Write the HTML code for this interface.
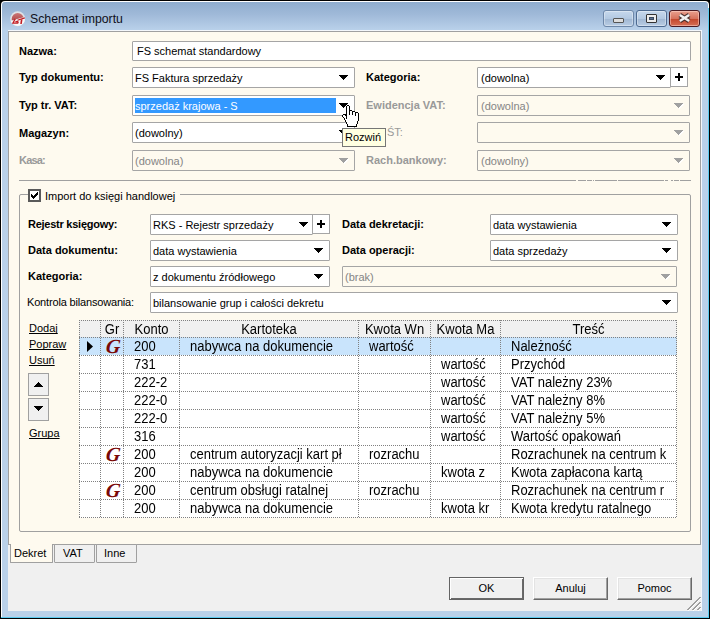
<!DOCTYPE html>
<html><head><meta charset="utf-8">
<style>
*{box-sizing:border-box;margin:0;padding:0}
html,body{width:710px;height:619px;overflow:hidden;background:#000}
body{position:relative;font-family:"Liberation Sans",sans-serif;font-size:11px;color:#000}
.a{position:absolute}
.t{position:absolute;white-space:nowrap;line-height:13px;font-size:11px}
.b{font-weight:bold}
.g{color:#999}
.box{position:absolute;border:1px solid #a5a5a5;background:#fff;height:21px;border-radius:1px}
.box.dis{background:#fefaef}
.arr{position:absolute;width:9px;height:5px;top:7px;shape-rendering:crispEdges}
.plus{position:absolute;border:1px solid #a5a5a5;background:#fff;width:18px;height:20px}
.plus:before{content:"";position:absolute;left:4px;top:8px;width:8px;height:2px;background:#000}
.plus:after{content:"";position:absolute;left:7px;top:5px;width:2px;height:8px;background:#000}
.gl{position:absolute;overflow:hidden;white-space:nowrap;font-size:13px;line-height:17px;transform:scaleY(1.1);transform-origin:0 13px}
.btn{position:absolute;width:75px;height:23px;background:#f0f0f0;border:1px solid;border-color:#fff #696969 #696969 #fff;box-shadow:inset -1px -1px 0 #a0a0a0,inset 1px 1px 0 #e3e3e3;text-align:center;line-height:20px;font-size:11px}
.dh{height:1px;background:repeating-linear-gradient(90deg,#808080 0 1px,transparent 1px 2px)}
.dv{width:1px;background:repeating-linear-gradient(180deg,#808080 0 1px,transparent 1px 2px)}
.gG{position:absolute;font-family:"Liberation Serif",serif;font-weight:bold;font-style:italic;font-size:20px;line-height:18px;color:#7a0808;transform:skewX(-7deg);transform-origin:0 18px}
</style></head><body>
<!-- window frame -->
<div class="a" style="left:0;top:0;width:710px;height:619px;border-radius:5px 5px 0 0;background:#000"></div>
<div class="a" style="left:1px;top:1px;width:708px;height:617px;border-radius:4px 4px 0 0;background:#fff"></div>
<div class="a" style="left:2px;top:2px;width:706px;height:615px;border-radius:3px 3px 0 0;background:linear-gradient(#8fadcf 0px,#9fb9d8 12px,#b9d1ea 28px,#bad1e9 100%)"></div>
<div class="a" style="left:708px;top:8px;width:1px;height:610px;background:#5ccbef"></div>
<div class="a" style="left:1px;top:617px;width:708px;height:1px;background:#5ccbef"></div>
<!-- client -->
<div class="a" style="left:8px;top:30px;width:694px;height:1px;background:#f4f7fb"></div>
<div class="a" style="left:701px;top:30px;width:1px;height:581px;background:#f4f7fb"></div>
<div class="a" style="left:8px;top:31px;width:693px;height:580px;background:#f0f0f0"></div>
<div class="a" style="left:8px;top:31px;width:693px;height:514px;background:#fefaef;border:1px solid #a0a0a0"></div>

<!-- title -->
<svg class="a" style="left:9px;top:10px" width="18" height="18" viewBox="0 0 18 18">
<defs><linearGradient id="rg" x1="0" y1="0" x2="0" y2="1"><stop offset="0" stop-color="#c97575"/><stop offset="1" stop-color="#a83434"/></linearGradient>
<clipPath id="cc"><circle cx="8.7" cy="8.7" r="7.2"/></clipPath><clipPath id="ct"><path d="M0 0H18V6.2L0 11.2Z"/></clipPath></defs>
<circle cx="8.7" cy="8.7" r="7.5" fill="#e9e9e9" opacity=".85"/>
<circle cx="8.7" cy="9" r="6" fill="url(#rg)" clip-path="url(#ct)"/>
<path clip-path="url(#cc)" d="M0 11.6 L18 6.6 V18 H0Z" fill="#fff" opacity=".75"/>
<path d="M6.2 8.9 L3.9 13.2 L8.7 13.2 L9.3 11.7 M6.4 11.7 L9.4 11.5" stroke="#c21d24" stroke-width="1.3" fill="none"/>
<path d="M8.5 10.3 L15.8 7.9" stroke="#c21d24" stroke-width="1.2" fill="none"/>
<path d="M12.7 9.3 L12 14" stroke="#c21d24" stroke-width="1.6" fill="none"/>
</svg>
<div class="t" style="left:30px;top:12px;font-size:12.3px;line-height:14px;color:#101020">Schemat importu</div>
<!-- caption buttons -->
<div class="a" style="left:603px;top:10px;width:31px;height:17px;border:1px solid #6d87a8;border-radius:3px;background:linear-gradient(#c6d8ec 0,#b3c9e2 50%,#9fb6d2 51%,#b9cde4 100%);box-shadow:inset 0 0 0 1px rgba(255,255,255,.35)"></div>
<div class="a" style="left:613px;top:18px;width:11px;height:5px;background:#ddd;border:1px solid #555;border-radius:1px"></div>
<div class="a" style="left:636px;top:10px;width:31px;height:17px;border:1px solid #4d6a90;border-radius:3px;background:linear-gradient(#c6d8ec 0,#b3c9e2 50%,#9fb6d2 51%,#b9cde4 100%);box-shadow:inset 0 0 0 1px rgba(255,255,255,.35)"></div>
<div class="a" style="left:646px;top:14px;width:11px;height:9px;background:#ececec;border:1px solid #333;border-radius:1px"></div>
<div class="a" style="left:649px;top:17px;width:5px;height:3px;background:#5a7090;border:1px solid #3a4a60"></div>
<div class="a" style="left:669px;top:10px;width:31px;height:17px;border:1px solid #4a1a22;border-radius:3px;background:linear-gradient(#e9a08e 0,#d7735e 50%,#c2452a 51%,#d66f55 100%);box-shadow:inset 0 0 0 1px rgba(255,220,210,.5)"></div>
<svg class="a" style="left:676px;top:11px" width="17" height="14" viewBox="0 0 17 14"><path d="M3.8 4 L13.2 10 M13.2 4 L3.8 10" stroke="#3d2b2b" stroke-width="4.6" opacity=".9"/><path d="M3.8 4 L13.2 10 M13.2 4 L3.8 10" stroke="#f2f2f2" stroke-width="2.6"/></svg>

<!-- top form -->
<div class="t b" style="left:19px;top:45px">Nazwa:</div>
<div class="box" style="left:132px;top:41px;width:559px;height:20px"></div>
<div class="t" style="left:137px;top:45px">FS schemat standardowy</div>

<div class="t b" style="left:19px;top:71px">Typ dokumentu:</div>
<div class="box" style="left:132px;top:67px;width:223px"><svg class="arr" style="left:206px" viewBox="0 0 9 5"><path d="M0 0h9v1h-1v1h-1v1h-1v1h-1v1h-1v-1h-1v-1h-1v-1h-1v-1h-1z"/></svg></div>
<div class="t" style="left:135px;top:72px">FS Faktura sprzedaży</div>

<div class="t b" style="left:19px;top:99px">Typ tr. VAT:</div>
<div class="box" style="left:132px;top:95px;width:223px"><svg class="arr" style="left:206px" viewBox="0 0 9 5"><path d="M0 0h9v1h-1v1h-1v1h-1v1h-1v1h-1v-1h-1v-1h-1v-1h-1v-1h-1z"/></svg></div>
<div class="a" style="left:135px;top:98px;width:201px;height:15px;background:#3399ff"></div>
<div class="t" style="left:135px;top:100px;color:#fff">sprzedaż krajowa - S</div>

<div class="t b" style="left:19px;top:127px">Magazyn:</div>
<div class="box" style="left:132px;top:122px;width:223px"><svg class="arr" style="left:206px" viewBox="0 0 9 5"><path d="M0 0h9v1h-1v1h-1v1h-1v1h-1v1h-1v-1h-1v-1h-1v-1h-1v-1h-1z"/></svg></div>
<div class="t" style="left:135px;top:127px">(dowolny)</div>

<div class="t b g" style="left:19px;top:154px;letter-spacing:-0.8px">Kasa:</div>
<div class="box dis" style="left:132px;top:150px;width:223px"><svg class="arr" style="left:206px;overflow:visible;filter:drop-shadow(1px 1px 0 #fff)" viewBox="0 0 9 5"><path d="M0 0h9v1h-1v1h-1v1h-1v1h-1v1h-1v-1h-1v-1h-1v-1h-1v-1h-1z" fill="#a0a0a0"/></svg></div>
<div class="t" style="color:#858585;left:135px;top:155px">(dowolna)</div>

<div class="t b" style="left:366px;top:71px">Kategoria:</div>
<div class="box" style="left:477px;top:67px;width:194px"><svg class="arr" style="left:178px" viewBox="0 0 9 5"><path d="M0 0h9v1h-1v1h-1v1h-1v1h-1v1h-1v-1h-1v-1h-1v-1h-1v-1h-1z"/></svg></div>
<div class="plus" style="left:670px;top:67px"></div>
<div class="t" style="left:481px;top:72px">(dowolna)</div>

<div class="t b g" style="left:366px;top:99px">Ewidencja VAT:</div>
<div class="box dis" style="left:477px;top:95px;width:213px"><svg class="arr" style="left:196px;overflow:visible;filter:drop-shadow(1px 1px 0 #fff)" viewBox="0 0 9 5"><path d="M0 0h9v1h-1v1h-1v1h-1v1h-1v1h-1v-1h-1v-1h-1v-1h-1v-1h-1z" fill="#a0a0a0"/></svg></div>
<div class="t" style="color:#858585;left:481px;top:100px">(dowolna)</div>

<div class="t g" style="left:387px;top:126px">ŚT:</div>
<div class="box dis" style="left:477px;top:122px;width:213px"><svg class="arr" style="left:196px;overflow:visible;filter:drop-shadow(1px 1px 0 #fff)" viewBox="0 0 9 5"><path d="M0 0h9v1h-1v1h-1v1h-1v1h-1v1h-1v-1h-1v-1h-1v-1h-1v-1h-1z" fill="#a0a0a0"/></svg></div>

<div class="t b g" style="left:366px;top:154px">Rach.bankowy:</div>
<div class="box dis" style="left:477px;top:150px;width:213px"><svg class="arr" style="left:196px;overflow:visible;filter:drop-shadow(1px 1px 0 #fff)" viewBox="0 0 9 5"><path d="M0 0h9v1h-1v1h-1v1h-1v1h-1v1h-1v-1h-1v-1h-1v-1h-1v-1h-1z" fill="#a0a0a0"/></svg></div>
<div class="t" style="color:#858585;left:481px;top:155px">(dowolny)</div>

<!-- separator -->
<div class="a" style="left:19px;top:180px;width:672px;height:1px;background:#a0a0a0"></div>

<div class="a" style="left:576px;top:180px;width:2px;height:1px;background:#fefaef"></div><div class="a" style="left:586px;top:180px;width:1px;height:1px;background:#fefaef"></div><div class="a" style="left:592px;top:180px;width:1px;height:1px;background:#fefaef"></div><div class="a" style="left:594px;top:180px;width:1px;height:1px;background:#fefaef"></div><div class="a" style="left:617px;top:180px;width:1px;height:1px;background:#fefaef"></div><div class="a" style="left:664px;top:180px;width:1px;height:1px;background:#fefaef"></div><div class="a" style="left:668px;top:180px;width:3px;height:1px;background:#fefaef"></div><div class="a" style="left:673px;top:180px;width:1px;height:1px;background:#fefaef"></div><div class="a" style="left:679px;top:180px;width:1px;height:1px;background:#fefaef"></div>
<!-- group box -->
<div class="a" style="left:19px;top:194px;width:672px;height:338px;border:1px solid #a0a0a0;border-radius:2px"></div>
<div class="a" style="left:28px;top:190px;width:152px;height:10px;background:#fefaef"></div>
<div class="a" style="left:28px;top:189px;width:13px;height:13px;border:2px solid #5a5a5a;background:#fff"></div>
<svg class="a" style="left:31px;top:192px" width="7" height="7" shape-rendering="crispEdges"><path d="M6 0h1v1h-1zM5 1h2v1h-2zM0 2h1v1h-1zM4 2h3v1h-3zM0 3h2v1h-2zM3 3h3v1h-3zM0 4h5v1h-5zM1 5h3v1h-3zM2 6h1v1h-1z"/></svg>
<div class="t" style="left:45px;top:190px">Import do księgi handlowej</div>

<div class="t b" style="left:28px;top:218px;letter-spacing:-0.25px">Rejestr księgowy:</div>
<div class="box" style="left:150px;top:214px;width:163px"><svg class="arr" style="left:148px" viewBox="0 0 9 5"><path d="M0 0h9v1h-1v1h-1v1h-1v1h-1v1h-1v-1h-1v-1h-1v-1h-1v-1h-1z"/></svg></div>
<div class="plus" style="left:312px;top:214px"></div>
<div class="t" style="left:153px;top:219px">RKS - Rejestr sprzedaży</div>

<div class="t b" style="left:28px;top:244px">Data dokumentu:</div>
<div class="box" style="left:150px;top:240px;width:180px"><svg class="arr" style="left:163px" viewBox="0 0 9 5"><path d="M0 0h9v1h-1v1h-1v1h-1v1h-1v1h-1v-1h-1v-1h-1v-1h-1v-1h-1z"/></svg></div>
<div class="t" style="left:153px;top:245px">data wystawienia</div>

<div class="t b" style="left:28px;top:270px">Kategoria:</div>
<div class="box" style="left:150px;top:266px;width:180px"><svg class="arr" style="left:163px" viewBox="0 0 9 5"><path d="M0 0h9v1h-1v1h-1v1h-1v1h-1v1h-1v-1h-1v-1h-1v-1h-1v-1h-1z"/></svg></div>
<div class="t" style="left:153px;top:271px">z dokumentu źródłowego</div>

<div class="t" style="left:27px;top:296px;letter-spacing:-0.17px">Kontrola bilansowania:</div>
<div class="box" style="left:150px;top:292px;width:528px"><svg class="arr" style="left:511px" viewBox="0 0 9 5"><path d="M0 0h9v1h-1v1h-1v1h-1v1h-1v1h-1v-1h-1v-1h-1v-1h-1v-1h-1z"/></svg></div>
<div class="t" style="left:153px;top:297px">bilansowanie grup i całości dekretu</div>

<div class="t b" style="left:342px;top:218px">Data dekretacji:</div>
<div class="box" style="left:490px;top:214px;width:188px"><svg class="arr" style="left:171px" viewBox="0 0 9 5"><path d="M0 0h9v1h-1v1h-1v1h-1v1h-1v1h-1v-1h-1v-1h-1v-1h-1v-1h-1z"/></svg></div>
<div class="t" style="left:493px;top:219px">data wystawienia</div>

<div class="t b" style="left:342px;top:244px">Data operacji:</div>
<div class="box" style="left:490px;top:240px;width:188px"><svg class="arr" style="left:171px" viewBox="0 0 9 5"><path d="M0 0h9v1h-1v1h-1v1h-1v1h-1v1h-1v-1h-1v-1h-1v-1h-1v-1h-1z"/></svg></div>
<div class="t" style="left:493px;top:245px">data sprzedaży</div>

<div class="box dis" style="left:342px;top:266px;width:335px"><svg class="arr" style="left:318px;overflow:visible;filter:drop-shadow(1px 1px 0 #fff)" viewBox="0 0 9 5"><path d="M0 0h9v1h-1v1h-1v1h-1v1h-1v1h-1v-1h-1v-1h-1v-1h-1v-1h-1z" fill="#a0a0a0"/></svg></div>
<div class="t" style="color:#858585;left:345px;top:271px">(brak)</div>

<!-- side links -->
<div class="t" style="left:29px;top:322px;text-decoration:underline;text-decoration-skip-ink:none">Dodaj</div>
<div class="t" style="left:29px;top:338px;text-decoration:underline;text-decoration-skip-ink:none">Popraw</div>
<div class="t" style="left:29px;top:354px;text-decoration:underline;text-decoration-skip-ink:none">Usuń</div>
<div class="a" style="left:28px;top:373px;width:21px;height:23px;background:#f0f0f0;border:1px solid #a0a0a0"><svg class="a" style="left:5px;top:8px" width="9" height="5" viewBox="0 0 9 5" shape-rendering="crispEdges"><path d="M4 0h1v1h1v1h1v1h1v1h1v1h-9v-1h1v-1h1v-1h1v-1h1z"/></svg></div>
<div class="a" style="left:28px;top:398px;width:21px;height:23px;background:#f0f0f0;border:1px solid #a0a0a0"><svg class="a" style="left:5px;top:7px" width="9" height="5" viewBox="0 0 9 5" shape-rendering="crispEdges"><path d="M0 0h9v1h-1v1h-1v1h-1v1h-1v1h-1v-1h-1v-1h-1v-1h-1v-1h-1z"/></svg></div>
<div class="t" style="left:29px;top:427px;text-decoration:underline;text-decoration-skip-ink:none">Grupa</div>

<!-- GRID -->
<div class="a" style="left:79px;top:320px;width:598px;height:198px;background:#fff"></div>
<div class="a" style="left:79px;top:320px;width:598px;height:17px;background:#f0f0f0"></div>
<div class="a" style="left:79px;top:337px;width:598px;height:18px;background:#c9e4fc"></div>
<div class="a dh" style="left:79px;top:320px;width:598px"></div>
<div class="a dh" style="left:79px;top:337px;width:598px"></div>
<div class="a dh" style="left:79px;top:355px;width:598px"></div>
<div class="a dh" style="left:79px;top:373px;width:598px"></div>
<div class="a dh" style="left:79px;top:391px;width:598px"></div>
<div class="a dh" style="left:79px;top:409px;width:598px"></div>
<div class="a dh" style="left:79px;top:427px;width:598px"></div>
<div class="a dh" style="left:79px;top:445px;width:598px"></div>
<div class="a dh" style="left:79px;top:463px;width:598px"></div>
<div class="a dh" style="left:79px;top:481px;width:598px"></div>
<div class="a dh" style="left:79px;top:499px;width:598px"></div>
<div class="a dh" style="left:79px;top:517px;width:598px"></div>
<div class="a dv" style="left:79px;top:320px;height:198px"></div>
<div class="a dv" style="left:100px;top:320px;height:198px"></div>
<div class="a dv" style="left:123px;top:320px;height:198px"></div>
<div class="a dv" style="left:179px;top:320px;height:198px"></div>
<div class="a dv" style="left:358px;top:320px;height:198px"></div>
<div class="a dv" style="left:430px;top:320px;height:198px"></div>
<div class="a dv" style="left:500px;top:320px;height:198px"></div>
<div class="a dv" style="left:676px;top:320px;height:198px"></div>
<div class="gl" style="left:101px;top:320px;width:22px;text-align:center;top:321px">Gr</div>
<div class="gl" style="left:124px;top:320px;width:55px;text-align:center;top:321px">Konto</div>
<div class="gl" style="left:180px;top:320px;width:178px;text-align:center;top:321px">Kartoteka</div>
<div class="gl" style="left:359px;top:320px;width:71px;text-align:center;top:321px">Kwota Wn</div>
<div class="gl" style="left:431px;top:320px;width:69px;text-align:center;top:321px">Kwota Ma</div>
<div class="gl" style="left:501px;top:320px;width:175px;text-align:center;top:321px">Treść</div>
<svg class="a" style="left:87px;top:341px" width="6" height="11" viewBox="0 0 6 11"><path d="M0 0L6 5.5L0 11Z"/></svg>
<div class="gG" style="left:105px;top:337px">G</div>
<div class="gl" style="left:134px;top:338px;width:44px">200</div>
<div class="gl" style="left:190px;top:338px;width:167px">nabywca na dokumencie</div>
<div class="gl" style="left:369px;top:338px;width:60px">wartość</div>
<div class="gl" style="left:511px;top:338px;width:164px">Należność</div>
<div class="gl" style="left:134px;top:356px;width:44px">731</div>
<div class="gl" style="left:441px;top:356px;width:58px">wartość</div>
<div class="gl" style="left:511px;top:356px;width:164px">Przychód</div>
<div class="gl" style="left:134px;top:374px;width:44px">222-2</div>
<div class="gl" style="left:441px;top:374px;width:58px">wartość</div>
<div class="gl" style="left:511px;top:374px;width:164px">VAT należny 23%</div>
<div class="gl" style="left:134px;top:392px;width:44px">222-0</div>
<div class="gl" style="left:441px;top:392px;width:58px">wartość</div>
<div class="gl" style="left:511px;top:392px;width:164px">VAT należny 8%</div>
<div class="gl" style="left:134px;top:410px;width:44px">222-0</div>
<div class="gl" style="left:441px;top:410px;width:58px">wartość</div>
<div class="gl" style="left:511px;top:410px;width:164px">VAT należny 5%</div>
<div class="gl" style="left:134px;top:428px;width:44px">316</div>
<div class="gl" style="left:441px;top:428px;width:58px">wartość</div>
<div class="gl" style="left:511px;top:428px;width:164px">Wartość opakowań</div>
<div class="gG" style="left:105px;top:445px">G</div>
<div class="gl" style="left:134px;top:446px;width:44px">200</div>
<div class="gl" style="left:190px;top:446px;width:167px">centrum autoryzacji kart pł</div>
<div class="gl" style="left:369px;top:446px;width:60px">rozrachu</div>
<div class="gl" style="left:511px;top:446px;width:164px">Rozrachunek na centrum k</div>
<div class="gl" style="left:134px;top:464px;width:44px">200</div>
<div class="gl" style="left:190px;top:464px;width:167px">nabywca na dokumencie</div>
<div class="gl" style="left:441px;top:464px;width:58px">kwota z</div>
<div class="gl" style="left:511px;top:464px;width:164px">Kwota zapłacona kartą</div>
<div class="gG" style="left:105px;top:481px">G</div>
<div class="gl" style="left:134px;top:482px;width:44px">200</div>
<div class="gl" style="left:190px;top:482px;width:167px">centrum obsługi ratalnej</div>
<div class="gl" style="left:369px;top:482px;width:60px">rozrachu</div>
<div class="gl" style="left:511px;top:482px;width:164px">Rozrachunek na centrum r</div>
<div class="gl" style="left:134px;top:500px;width:44px">200</div>
<div class="gl" style="left:190px;top:500px;width:167px">nabywca na dokumencie</div>
<div class="gl" style="left:441px;top:500px;width:58px">kwota kr</div>
<div class="gl" style="left:511px;top:500px;width:164px">Kwota kredytu ratalnego</div>
<!-- /GRID -->

<!-- tooltip + cursor -->
<div class="a" style="left:342px;top:128px;width:44px;height:19px;background:#ffffe1;border:1px solid #767676"></div>
<div class="t" style="left:345px;top:131px">Rozwiń</div>
<svg class="a" style="left:342px;top:105px" width="17" height="22" shape-rendering="crispEdges"><rect x="5" y="0" width="2" height="1" fill="#000"/><rect x="4" y="1" width="1" height="1" fill="#000"/><rect x="5" y="1" width="2" height="1" fill="#fff"/><rect x="7" y="1" width="1" height="1" fill="#000"/><rect x="4" y="2" width="1" height="1" fill="#000"/><rect x="5" y="2" width="2" height="1" fill="#fff"/><rect x="7" y="2" width="1" height="1" fill="#000"/><rect x="4" y="3" width="1" height="1" fill="#000"/><rect x="5" y="3" width="2" height="1" fill="#fff"/><rect x="7" y="3" width="1" height="1" fill="#000"/><rect x="4" y="4" width="1" height="1" fill="#000"/><rect x="5" y="4" width="2" height="1" fill="#fff"/><rect x="7" y="4" width="1" height="1" fill="#000"/><rect x="4" y="5" width="1" height="1" fill="#000"/><rect x="5" y="5" width="2" height="1" fill="#fff"/><rect x="7" y="5" width="3" height="1" fill="#000"/><rect x="4" y="6" width="1" height="1" fill="#000"/><rect x="5" y="6" width="2" height="1" fill="#fff"/><rect x="7" y="6" width="1" height="1" fill="#000"/><rect x="8" y="6" width="2" height="1" fill="#fff"/><rect x="10" y="6" width="3" height="1" fill="#000"/><rect x="4" y="7" width="1" height="1" fill="#000"/><rect x="5" y="7" width="2" height="1" fill="#fff"/><rect x="7" y="7" width="1" height="1" fill="#000"/><rect x="8" y="7" width="2" height="1" fill="#fff"/><rect x="10" y="7" width="1" height="1" fill="#000"/><rect x="11" y="7" width="2" height="1" fill="#fff"/><rect x="13" y="7" width="3" height="1" fill="#000"/><rect x="4" y="8" width="1" height="1" fill="#000"/><rect x="5" y="8" width="2" height="1" fill="#fff"/><rect x="7" y="8" width="1" height="1" fill="#000"/><rect x="8" y="8" width="2" height="1" fill="#fff"/><rect x="10" y="8" width="1" height="1" fill="#000"/><rect x="11" y="8" width="2" height="1" fill="#fff"/><rect x="13" y="8" width="1" height="1" fill="#000"/><rect x="14" y="8" width="2" height="1" fill="#fff"/><rect x="16" y="8" width="1" height="1" fill="#000"/><rect x="1" y="9" width="4" height="1" fill="#000"/><rect x="5" y="9" width="2" height="1" fill="#fff"/><rect x="7" y="9" width="1" height="1" fill="#000"/><rect x="8" y="9" width="2" height="1" fill="#fff"/><rect x="10" y="9" width="1" height="1" fill="#000"/><rect x="11" y="9" width="2" height="1" fill="#fff"/><rect x="13" y="9" width="1" height="1" fill="#000"/><rect x="14" y="9" width="2" height="1" fill="#fff"/><rect x="16" y="9" width="1" height="1" fill="#000"/><rect x="0" y="10" width="1" height="1" fill="#000"/><rect x="1" y="10" width="2" height="1" fill="#fff"/><rect x="3" y="10" width="2" height="1" fill="#000"/><rect x="5" y="10" width="8" height="1" fill="#fff"/><rect x="13" y="10" width="1" height="1" fill="#000"/><rect x="14" y="10" width="2" height="1" fill="#fff"/><rect x="16" y="10" width="1" height="1" fill="#000"/><rect x="0" y="11" width="1" height="1" fill="#000"/><rect x="1" y="11" width="3" height="1" fill="#fff"/><rect x="4" y="11" width="1" height="1" fill="#000"/><rect x="5" y="11" width="11" height="1" fill="#fff"/><rect x="16" y="11" width="1" height="1" fill="#000"/><rect x="1" y="12" width="1" height="1" fill="#000"/><rect x="2" y="12" width="2" height="1" fill="#fff"/><rect x="4" y="12" width="1" height="1" fill="#000"/><rect x="5" y="12" width="11" height="1" fill="#fff"/><rect x="16" y="12" width="1" height="1" fill="#000"/><rect x="2" y="13" width="1" height="1" fill="#000"/><rect x="3" y="13" width="1" height="1" fill="#fff"/><rect x="4" y="13" width="1" height="1" fill="#000"/><rect x="5" y="13" width="11" height="1" fill="#fff"/><rect x="16" y="13" width="1" height="1" fill="#000"/><rect x="2" y="14" width="1" height="1" fill="#000"/><rect x="3" y="14" width="13" height="1" fill="#fff"/><rect x="16" y="14" width="1" height="1" fill="#000"/><rect x="3" y="15" width="1" height="1" fill="#000"/><rect x="4" y="15" width="12" height="1" fill="#fff"/><rect x="16" y="15" width="1" height="1" fill="#000"/><rect x="3" y="16" width="1" height="1" fill="#000"/><rect x="4" y="16" width="11" height="1" fill="#fff"/><rect x="15" y="16" width="1" height="1" fill="#000"/><rect x="4" y="17" width="1" height="1" fill="#000"/><rect x="5" y="17" width="10" height="1" fill="#fff"/><rect x="15" y="17" width="1" height="1" fill="#000"/><rect x="4" y="18" width="1" height="1" fill="#000"/><rect x="5" y="18" width="10" height="1" fill="#fff"/><rect x="15" y="18" width="1" height="1" fill="#000"/><rect x="5" y="19" width="1" height="1" fill="#000"/><rect x="6" y="19" width="8" height="1" fill="#fff"/><rect x="14" y="19" width="1" height="1" fill="#000"/><rect x="5" y="20" width="1" height="1" fill="#000"/><rect x="6" y="20" width="8" height="1" fill="#fff"/><rect x="14" y="20" width="1" height="1" fill="#000"/><rect x="5" y="21" width="10" height="1" fill="#000"/></svg>

<!-- tabs -->
<div class="a" style="left:8px;top:544px;width:693px;height:1px;background:#a0a0a0"></div>
<div class="a" style="left:10px;top:544px;width:43px;height:19px;background:#fefaef;border:1px solid #a0a0a0;border-top:none;border-radius:0 0 1px 1px"></div>
<div class="a" style="left:54px;top:544px;width:41px;height:19px;background:#f0f0f0;border:1px solid #a0a0a0;border-radius:1px"></div>
<div class="a" style="left:96px;top:544px;width:41px;height:19px;background:#f0f0f0;border:1px solid #a0a0a0;border-radius:1px"></div>
<div class="t" style="left:14px;top:547px">Dekret</div>
<div class="t" style="left:63px;top:547px">VAT</div>
<div class="t" style="left:104px;top:547px">Inne</div>

<svg class="a" style="left:687px;top:597px" width="15" height="14" shape-rendering="crispEdges"><rect x="13" y="0" width="1" height="1" fill="#a0a0a0"/><rect x="12" y="0" width="1" height="1" fill="#a0a0a0"/><rect x="13" y="1" width="1" height="1" fill="#fff"/><rect x="12" y="1" width="1" height="1" fill="#a0a0a0"/><rect x="11" y="1" width="1" height="1" fill="#a0a0a0"/><rect x="12" y="2" width="1" height="1" fill="#fff"/><rect x="11" y="2" width="1" height="1" fill="#a0a0a0"/><rect x="10" y="2" width="1" height="1" fill="#a0a0a0"/><rect x="11" y="3" width="1" height="1" fill="#fff"/><rect x="10" y="3" width="1" height="1" fill="#a0a0a0"/><rect x="9" y="3" width="1" height="1" fill="#a0a0a0"/><rect x="10" y="4" width="1" height="1" fill="#fff"/><rect x="9" y="4" width="1" height="1" fill="#a0a0a0"/><rect x="8" y="4" width="1" height="1" fill="#a0a0a0"/><rect x="9" y="5" width="1" height="1" fill="#fff"/><rect x="8" y="5" width="1" height="1" fill="#a0a0a0"/><rect x="7" y="5" width="1" height="1" fill="#a0a0a0"/><rect x="8" y="6" width="1" height="1" fill="#fff"/><rect x="7" y="6" width="1" height="1" fill="#a0a0a0"/><rect x="6" y="6" width="1" height="1" fill="#a0a0a0"/><rect x="7" y="7" width="1" height="1" fill="#fff"/><rect x="6" y="7" width="1" height="1" fill="#a0a0a0"/><rect x="5" y="7" width="1" height="1" fill="#a0a0a0"/><rect x="6" y="8" width="1" height="1" fill="#fff"/><rect x="5" y="8" width="1" height="1" fill="#a0a0a0"/><rect x="4" y="8" width="1" height="1" fill="#a0a0a0"/><rect x="5" y="9" width="1" height="1" fill="#fff"/><rect x="4" y="9" width="1" height="1" fill="#a0a0a0"/><rect x="3" y="9" width="1" height="1" fill="#a0a0a0"/><rect x="4" y="10" width="1" height="1" fill="#fff"/><rect x="3" y="10" width="1" height="1" fill="#a0a0a0"/><rect x="2" y="10" width="1" height="1" fill="#a0a0a0"/><rect x="3" y="11" width="1" height="1" fill="#fff"/><rect x="2" y="11" width="1" height="1" fill="#a0a0a0"/><rect x="1" y="11" width="1" height="1" fill="#a0a0a0"/><rect x="2" y="12" width="1" height="1" fill="#fff"/><rect x="1" y="12" width="1" height="1" fill="#a0a0a0"/><rect x="0" y="12" width="1" height="1" fill="#a0a0a0"/><rect x="1" y="13" width="1" height="1" fill="#fff"/><rect x="13" y="5" width="1" height="1" fill="#a0a0a0"/><rect x="12" y="5" width="1" height="1" fill="#a0a0a0"/><rect x="13" y="6" width="1" height="1" fill="#fff"/><rect x="12" y="6" width="1" height="1" fill="#a0a0a0"/><rect x="11" y="6" width="1" height="1" fill="#a0a0a0"/><rect x="12" y="7" width="1" height="1" fill="#fff"/><rect x="11" y="7" width="1" height="1" fill="#a0a0a0"/><rect x="10" y="7" width="1" height="1" fill="#a0a0a0"/><rect x="11" y="8" width="1" height="1" fill="#fff"/><rect x="10" y="8" width="1" height="1" fill="#a0a0a0"/><rect x="9" y="8" width="1" height="1" fill="#a0a0a0"/><rect x="10" y="9" width="1" height="1" fill="#fff"/><rect x="9" y="9" width="1" height="1" fill="#a0a0a0"/><rect x="8" y="9" width="1" height="1" fill="#a0a0a0"/><rect x="9" y="10" width="1" height="1" fill="#fff"/><rect x="8" y="10" width="1" height="1" fill="#a0a0a0"/><rect x="7" y="10" width="1" height="1" fill="#a0a0a0"/><rect x="8" y="11" width="1" height="1" fill="#fff"/><rect x="7" y="11" width="1" height="1" fill="#a0a0a0"/><rect x="6" y="11" width="1" height="1" fill="#a0a0a0"/><rect x="7" y="12" width="1" height="1" fill="#fff"/><rect x="6" y="12" width="1" height="1" fill="#a0a0a0"/><rect x="5" y="12" width="1" height="1" fill="#a0a0a0"/><rect x="6" y="13" width="1" height="1" fill="#fff"/><rect x="13" y="10" width="1" height="1" fill="#a0a0a0"/><rect x="12" y="10" width="1" height="1" fill="#a0a0a0"/><rect x="13" y="11" width="1" height="1" fill="#fff"/><rect x="12" y="11" width="1" height="1" fill="#a0a0a0"/><rect x="11" y="11" width="1" height="1" fill="#a0a0a0"/><rect x="12" y="12" width="1" height="1" fill="#fff"/><rect x="11" y="12" width="1" height="1" fill="#a0a0a0"/><rect x="10" y="12" width="1" height="1" fill="#a0a0a0"/><rect x="11" y="13" width="1" height="1" fill="#fff"/></svg>
<!-- buttons -->
<div class="btn" style="left:449px;top:577px;border-color:#646464;box-shadow:inset 1px 1px 0 #fff,inset -1px -1px 0 #696969">OK</div>
<div class="btn" style="left:533px;top:577px">Anuluj</div>
<div class="btn" style="left:617px;top:577px">Pomoc</div>
</body></html>
